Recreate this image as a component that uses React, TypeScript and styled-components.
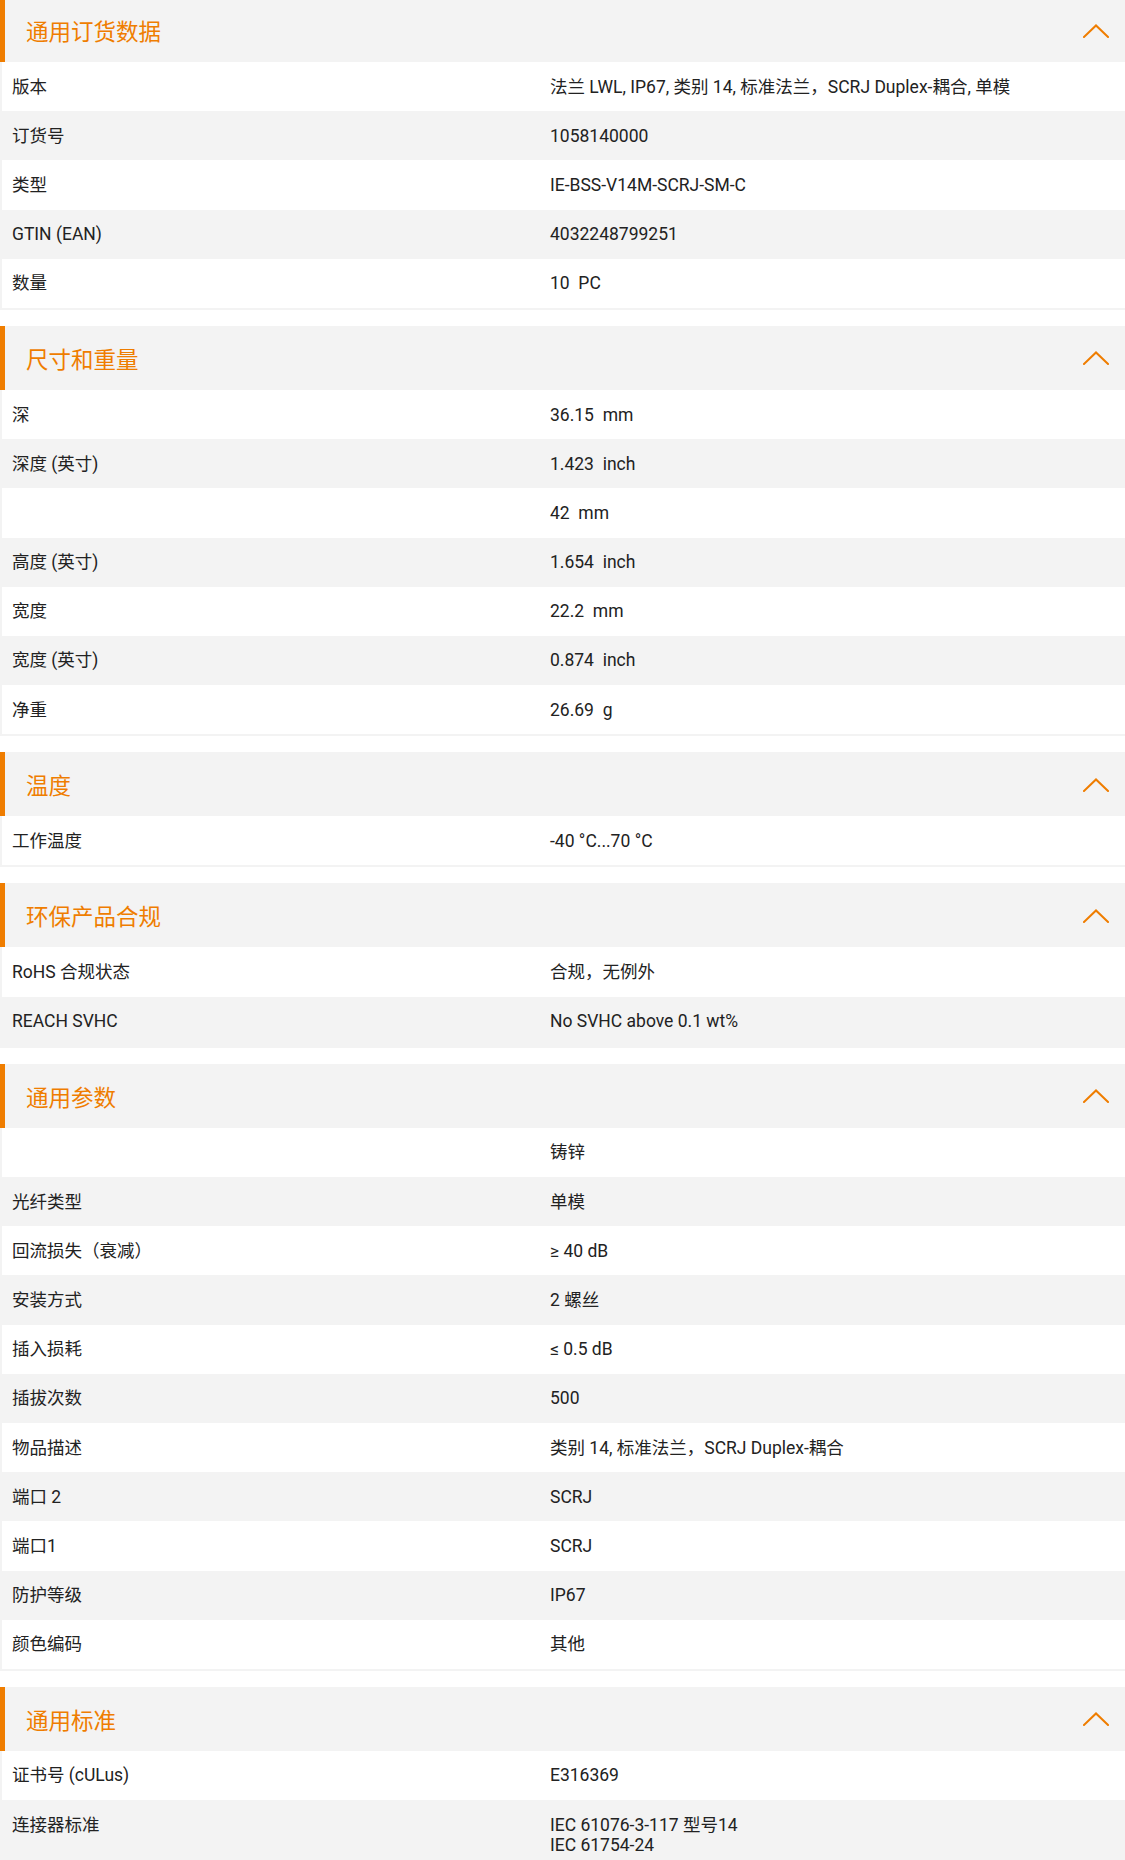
import React from "react";
import styled, { createGlobalStyle } from "styled-components";

const GlobalStyle = createGlobalStyle`
  html, body {
    margin: 0;
    padding: 0;
    background: #ffffff;
  }
  body {
    font-family: Roboto, "Noto Sans CJK SC", sans-serif;
    color: #222222;
    -webkit-font-smoothing: antialiased;
  }
`;

const ORANGE = "#ef7d00";
const GREY = "#f3f3f3";

const Page = styled.div`
  display: flex;
  flex-direction: column;
  gap: 16px;
  margin-top: -2px;
  width: 1125px;
`;

const Section = styled.section`
  display: flex;
  flex-direction: column;
`;

const Header = styled.div`
  height: 64px;
  box-sizing: border-box;
  background: ${GREY};
  border-left: 5px solid ${ORANGE};
  padding: 0 16px 0 21px;
  display: flex;
  align-items: center;
  justify-content: space-between;
`;

const Title = styled.h2`
  margin: 0;
  font-family: "Noto Sans CJK SC", Roboto, sans-serif;
  font-weight: 400;
  font-size: 22.5px;
  line-height: 1;
  color: ${ORANGE};
`;

const Chevron = styled.svg`
  width: 26px;
  height: 14px;
  display: block;
  margin-top: 1px;
`;

const Table = styled.div`
  display: flex;
  flex-direction: column;
  border-left: 2px solid ${GREY};
  border-bottom: 2px solid ${GREY};
`;

const Row = styled.div<{ $alt: boolean }>`
  display: grid;
  grid-template-columns: 538px 1fr;
  background: ${(p) => (p.$alt ? GREY : "#ffffff")};
  font-size: 17.5px;
  line-height: 20px;
`;

const Cell = styled.div`
  padding: 14.6px 10px;
  white-space: pre;
`;

const Line = styled.div``;

const ChevronUp = () => (
  <Chevron viewBox="0 0 26 14" fill="none">
    <polyline
      points="1,13 13,1.5 25,13"
      stroke={ORANGE}
      strokeWidth="2"
      strokeLinecap="square"
      fill="none"
    />
  </Chevron>
);

type RowData = [string, string | string[]];

const sections: { title: string; rows: RowData[] }[] = [
  {
    title: "通用订货数据",
    rows: [
      ["版本", "法兰 LWL, IP67, 类别 14, 标准法兰，SCRJ Duplex-耦合, 单模"],
      ["订货号", "1058140000"],
      ["类型", "IE-BSS-V14M-SCRJ-SM-C"],
      ["GTIN (EAN)", "4032248799251"],
      ["数量", "10  PC"],
    ],
  },
  {
    title: "尺寸和重量",
    rows: [
      ["深", "36.15  mm"],
      ["深度 (英寸)", "1.423  inch"],
      ["", "42  mm"],
      ["高度 (英寸)", "1.654  inch"],
      ["宽度", "22.2  mm"],
      ["宽度 (英寸)", "0.874  inch"],
      ["净重", "26.69  g"],
    ],
  },
  {
    title: "温度",
    rows: [["工作温度", "-40 °C...70 °C"]],
  },
  {
    title: "环保产品合规",
    rows: [
      ["RoHS 合规状态", "合规，无例外"],
      ["REACH SVHC", "No SVHC above 0.1 wt%"],
    ],
  },
  {
    title: "通用参数",
    rows: [
      ["", "铸锌"],
      ["光纤类型", "单模"],
      ["回流损失（衰减）", "≥ 40 dB"],
      ["安装方式", "2 螺丝"],
      ["插入损耗", "≤ 0.5 dB"],
      ["插拔次数", "500"],
      ["物品描述", "类别 14, 标准法兰，SCRJ Duplex-耦合"],
      ["端口 2", "SCRJ"],
      ["端口1", "SCRJ"],
      ["防护等级", "IP67"],
      ["颜色编码", "其他"],
    ],
  },
  {
    title: "通用标准",
    rows: [
      ["证书号 (cULus)", "E316369"],
      ["连接器标准", ["IEC 61076-3-117 型号14", "IEC 61754-24"]],
    ],
  },
];

export default function App() {
  return (
    <>
      <GlobalStyle />
      <Page>
        {sections.map((s) => (
          <Section key={s.title}>
            <Header>
              <Title>{s.title}</Title>
              <ChevronUp />
            </Header>
            <Table>
              {s.rows.map(([label, value], i) => (
                <Row key={i} $alt={i % 2 === 1}>
                  <Cell>{label}</Cell>
                  <Cell>
                    {Array.isArray(value)
                      ? value.map((v) => <Line key={v}>{v}</Line>)
                      : value}
                  </Cell>
                </Row>
              ))}
            </Table>
          </Section>
        ))}
      </Page>
    </>
  );
}
